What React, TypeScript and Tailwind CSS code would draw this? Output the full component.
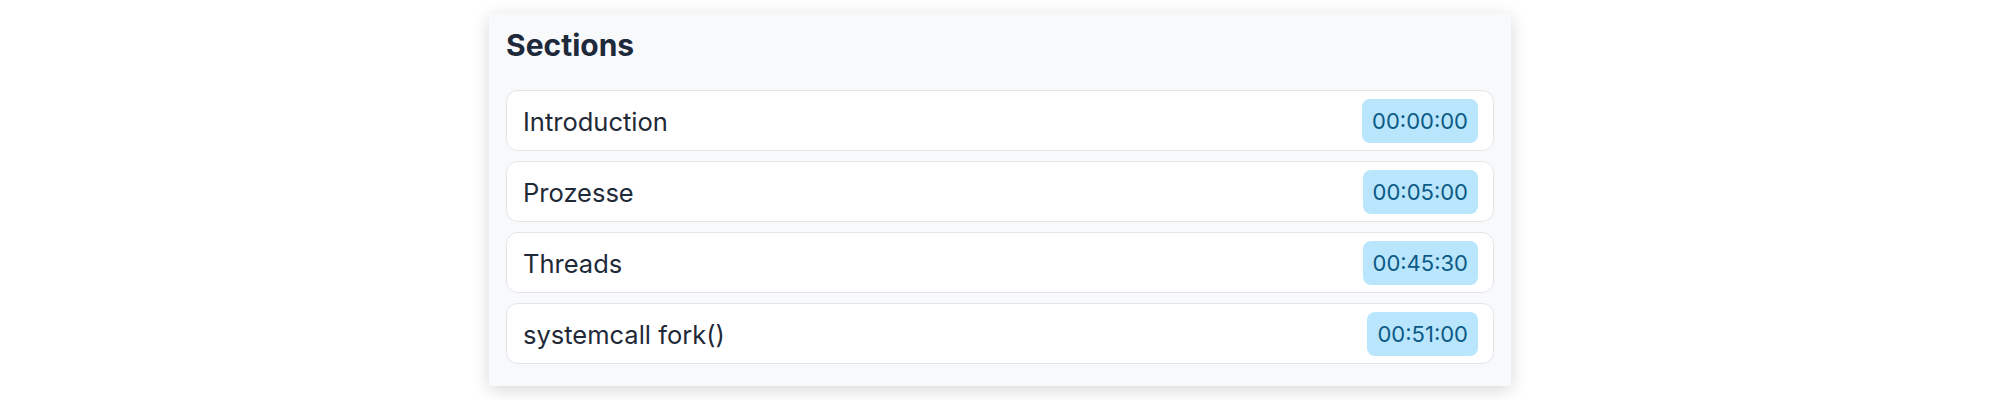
const sections = [
  { title: "Introduction", time: "00:00:00" },
  { title: "Prozesse", time: "00:05:00" },
  { title: "Threads", time: "00:45:30" },
  { title: "systemcall fork()", time: "00:51:00" },
];

export default function App() {
  return (
    <div className="w-full h-[400px] bg-white pt-[13px] font-['Inter',sans-serif]">
      <div className="mx-auto w-[1022px] rounded-[3px] bg-[#f8f9fb] px-[17px] pt-[14px] pb-[22px] shadow-[0_4px_18px_rgba(0,0,0,0.16)]">
        <h2 className="text-[30px] leading-[37px] font-bold text-[#1e293b] mb-[26px]">Sections</h2>
        <ul className="flex flex-col gap-[10px]">
          {sections.map((s) => (
            <li
              key={s.title}
              className="flex items-center justify-between h-[61px] rounded-[12px] border border-[#e2e5ea] bg-white pl-[16px] pr-[15px]"
            >
              <span className="pt-[3px] text-[25.5px] text-[#1f2937]">{s.title}</span>
              <span className="flex items-center h-[44px] rounded-[8px] bg-[#bae6fd] px-[10px] pt-[1px] text-[22px] text-[#0b5a86]">
                {s.time}
              </span>
            </li>
          ))}
        </ul>
      </div>
    </div>
  );
}
